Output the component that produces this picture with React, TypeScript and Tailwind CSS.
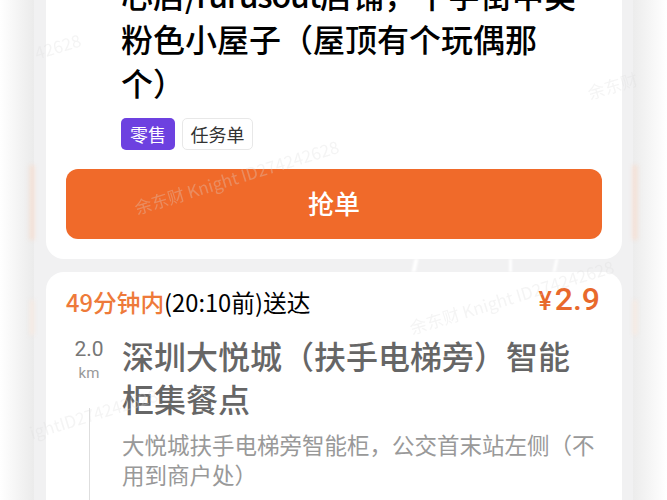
const FONT = "font-['Noto_Sans_CJK_SC','Noto_Sans',sans-serif]";

function Watermark({ className, text }: { className: string; text: string }) {
  return (
    <div className={`absolute whitespace-nowrap text-[17px] text-[#dcdcdc] opacity-30 -rotate-[17deg] origin-left ${className}`}>
      {text}
    </div>
  );
}

export default function App() {
  return (
    <div className={`relative flex h-[500px] w-[667px] overflow-hidden bg-white ${FONT}`}>
      {/* 左の余白 */}
      <div className="flex h-full w-[34px] flex-col items-end bg-gradient-to-r from-white to-[#ebebeb] pt-[165px]">
        <div className="h-[75px] w-[6px] bg-gradient-to-l from-[#fbd9c6] to-transparent blur-[2px]" />
        <div className="mt-[60px] h-[35px] w-[4px] bg-[#f8eae2] blur-[2px]" />
      </div>

      <div className="flex h-full w-[599px] flex-col bg-[#f1f1f2] pl-[12px] pr-[11px]">
        {/* 上のカード */}
        <div className="h-[259px] shrink-0 overflow-hidden rounded-b-[18px] bg-white px-[20px]">
          <div className="-mt-[28px] pl-[55px] text-[32px] font-medium leading-[44px] text-black">
            <div className="whitespace-nowrap">
              心店<span className="tracking-[-1.2px]">/rurusout</span>店铺，十字街中美
            </div>
            <div className="whitespace-nowrap">粉色小屋子（屋顶有个玩偶那</div>
            <div>个）</div>
          </div>
          <div className="mt-[14px] flex gap-[7px] pl-[55px]">
            <span className="flex h-[32px] w-[54px] items-center justify-center rounded-[5px] bg-[#6d41e0] text-[18px] text-white">零售</span>
            <span className="flex h-[32px] w-[71px] items-center justify-center rounded-[5px] border border-[#e8e8e8] text-[18px] text-[#333]">任务单</span>
          </div>
          <button className="mt-[19px] flex h-[70px] w-[536px] items-center justify-center rounded-[12px] bg-[#f06a2a] pb-[4px] text-[26px] font-medium text-white">
            抢单
          </button>
        </div>

        {/* カードの間の白い切れ目 */}
        <div className="flex h-[13px] shrink-0 pl-[367px]">
          <div className="h-full w-[4px] -skew-x-12 bg-white blur-[1px]" />
          <div className="ml-[92px] h-full w-[3px] bg-white blur-[1px]" />
          <div className="ml-[42px] h-full w-[3px] -skew-x-12 bg-white blur-[1px]" />
        </div>

        {/* 下のカード */}
        <div className="grow rounded-t-[18px] bg-white pl-[20px] pr-[22px]">
          <div className="mt-[14px] flex items-start justify-between">
            <div className="text-[23.7px] leading-[32px] text-black">
              <span className="font-medium text-[#ee7a3a]">49分钟内</span>(20:10前)送达
            </div>
            <div className="-mt-[3px] flex items-baseline font-['Roboto',sans-serif] font-medium leading-[32px] text-[#e8692c]">
              <span className="mr-[3px] text-[25px]">¥</span>
              <span className="text-[32px]">2.9</span>
            </div>
          </div>
          <div className="mt-[16px] flex">
            <div className="flex w-[56px] shrink-0 flex-col pl-[8px] text-center text-[#777]">
              <div className="mt-[3px] w-[30px] font-['Roboto',sans-serif] text-[21px] leading-[24px]">2.0</div>
              <div className="w-[30px] font-['Roboto',sans-serif] text-[15px] leading-[24px] text-[#999]">km</div>
              <div className="ml-[15px] mt-[23px] h-[100px] w-px bg-[#dedede]" />
            </div>
            <div>
              <div className="text-[32px] font-medium leading-[43px] text-[#666]">
                <div className="whitespace-nowrap">深圳大悦城（扶手电梯旁）智能</div>
                <div>柜集餐点</div>
              </div>
              <div className="mt-[9px] text-[22.5px] leading-[30px] text-[#999]">
                <div className="whitespace-nowrap">大悦城扶手电梯旁智能柜，公交首末站左侧（不</div>
                <div>用到商户处）</div>
              </div>
            </div>
          </div>
        </div>
      </div>

      {/* 右の余白 */}
      <div className="flex h-full w-[34px] flex-col bg-gradient-to-r from-[#ececec] to-white pt-[165px]">
        <div className="h-[75px] w-[6px] bg-gradient-to-r from-[#fbd9c6] to-transparent blur-[2px]" />
        <div className="mt-[60px] h-[35px] w-[4px] bg-[#f8eae2] blur-[2px]" />
      </div>

      {/* 透かし */}
      <Watermark className="left-[35px] top-[40px]" text="42628" />
      <Watermark className="left-[588px] top-[80px]" text="余东财" />
      <Watermark className="left-[135px] top-[195px]" text="余东财 Knight ID274242628" />
      <Watermark className="left-[410px] top-[315px]" text="余东财 Knight ID274242628" />
      <Watermark className="left-[30px] top-[420px]" text="ightID274242628" />
    </div>
  );
}
